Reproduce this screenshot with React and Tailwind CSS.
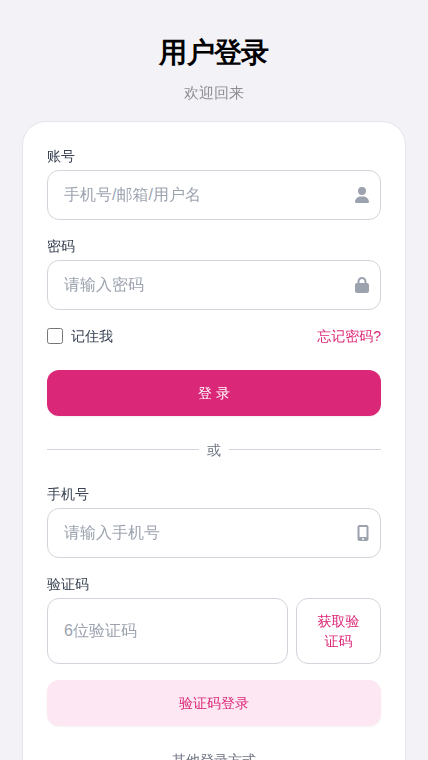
import React, { useState } from "react";
import { FaUser, FaLock, FaMobileScreenButton } from "react-icons/fa6";

const inputClass =
  "block w-full px-4 py-3 text-base leading-6 text-gray-900 bg-white border border-[#d1d5db] rounded-xl placeholder:text-[#9ca3af] focus:outline-none focus:border-[#db2777]";

const Field = ({ id, label, type = "text", placeholder, icon }) => (
  <div>
    <label htmlFor={id} className="block mb-1 text-sm text-[#374151]">
      {label}
    </label>
    <div className="relative">
      <input
        id={id}
        type={type}
        placeholder={placeholder}
        className={inputClass}
      />
      <div className="absolute inset-y-0 right-0 flex items-center pr-3 text-[#9ca3af] pointer-events-none">
        {icon}
      </div>
    </div>
  </div>
);

const App = () => {
  const [remember, setRemember] = useState(false);

  return (
    <div className="h-screen overflow-hidden bg-[#f2f2f7] font-['Liberation_Sans','WenQuanYi_Zen_Hei','Noto_Sans_CJK_SC',sans-serif]">
      <div className="w-full max-w-sm pt-8 mx-auto">
        <div className="text-center">
          <h1 className="font-['Liberation_Sans',sans-serif] text-[28px] leading-[42px] font-bold tracking-tight text-black">
            用户登录
          </h1>
          <p className="mt-2 text-[15px] leading-[22px] text-[#8e8e93]">
            欢迎回来
          </p>
        </div>

        <div className="p-6 mt-[17px] bg-white border border-[#e5e5ea] rounded-3xl">
          <form className="space-y-4" onSubmit={(e) => e.preventDefault()}>
            <Field
              id="account"
              label="账号"
              placeholder="手机号/邮箱/用户名"
              icon={<FaUser className="w-3.5 h-4" />}
            />
            <Field
              id="password"
              type="password"
              label="密码"
              placeholder="请输入密码"
              icon={<FaLock className="w-3.5 h-4" />}
            />

            <div className="flex items-center justify-between text-sm">
              <label className="flex items-center text-[#374151]">
                <input
                  type="checkbox"
                  checked={remember}
                  onChange={(e) => setRemember(e.target.checked)}
                  className="w-4 h-4 mr-2"
                />
                记住我
              </label>
              <a href="#" className="text-[#db2777]">
                忘记密码?
              </a>
            </div>

            <button
              type="submit"
              className="w-full px-4 py-3 mt-2 text-sm text-white bg-[#db2777] border border-transparent rounded-xl shadow-xs"
            >
              登 录
            </button>
          </form>

          <div className="flex items-center my-6 text-sm text-[#6b7280]">
            <div className="flex-1 mb-0.5 border-t border-[#d1d5db]" />
            <span className="px-2">或</span>
            <div className="flex-1 mb-0.5 border-t border-[#d1d5db]" />
          </div>

          <form className="space-y-4" onSubmit={(e) => e.preventDefault()}>
            <Field
              id="phone"
              type="tel"
              label="手机号"
              placeholder="请输入手机号"
              icon={<FaMobileScreenButton className="w-3 h-4" />}
            />

            <div>
              <label htmlFor="code" className="block mb-1 text-sm text-[#374151]">
                验证码
              </label>
              <div className="flex gap-2">
                <input
                  id="code"
                  placeholder="6位验证码"
                  className={`${inputClass} flex-1 min-w-0`}
                />
                <button
                  type="button"
                  className="w-[85px] px-4 py-3 text-sm text-[#db2777] bg-white border border-[#d1d5db] rounded-xl"
                >
                  获取验证码
                </button>
              </div>
            </div>

            <button
              type="submit"
              className="w-full px-4 py-3 text-sm text-[#db2777] bg-[#fce7f3] border border-transparent rounded-xl shadow-xs"
            >
              验证码登录
            </button>
          </form>

          <p className="mt-6 text-sm text-center text-[#6b7280]">
            其他登录方式
          </p>
        </div>
      </div>
    </div>
  );
};

export default App;
